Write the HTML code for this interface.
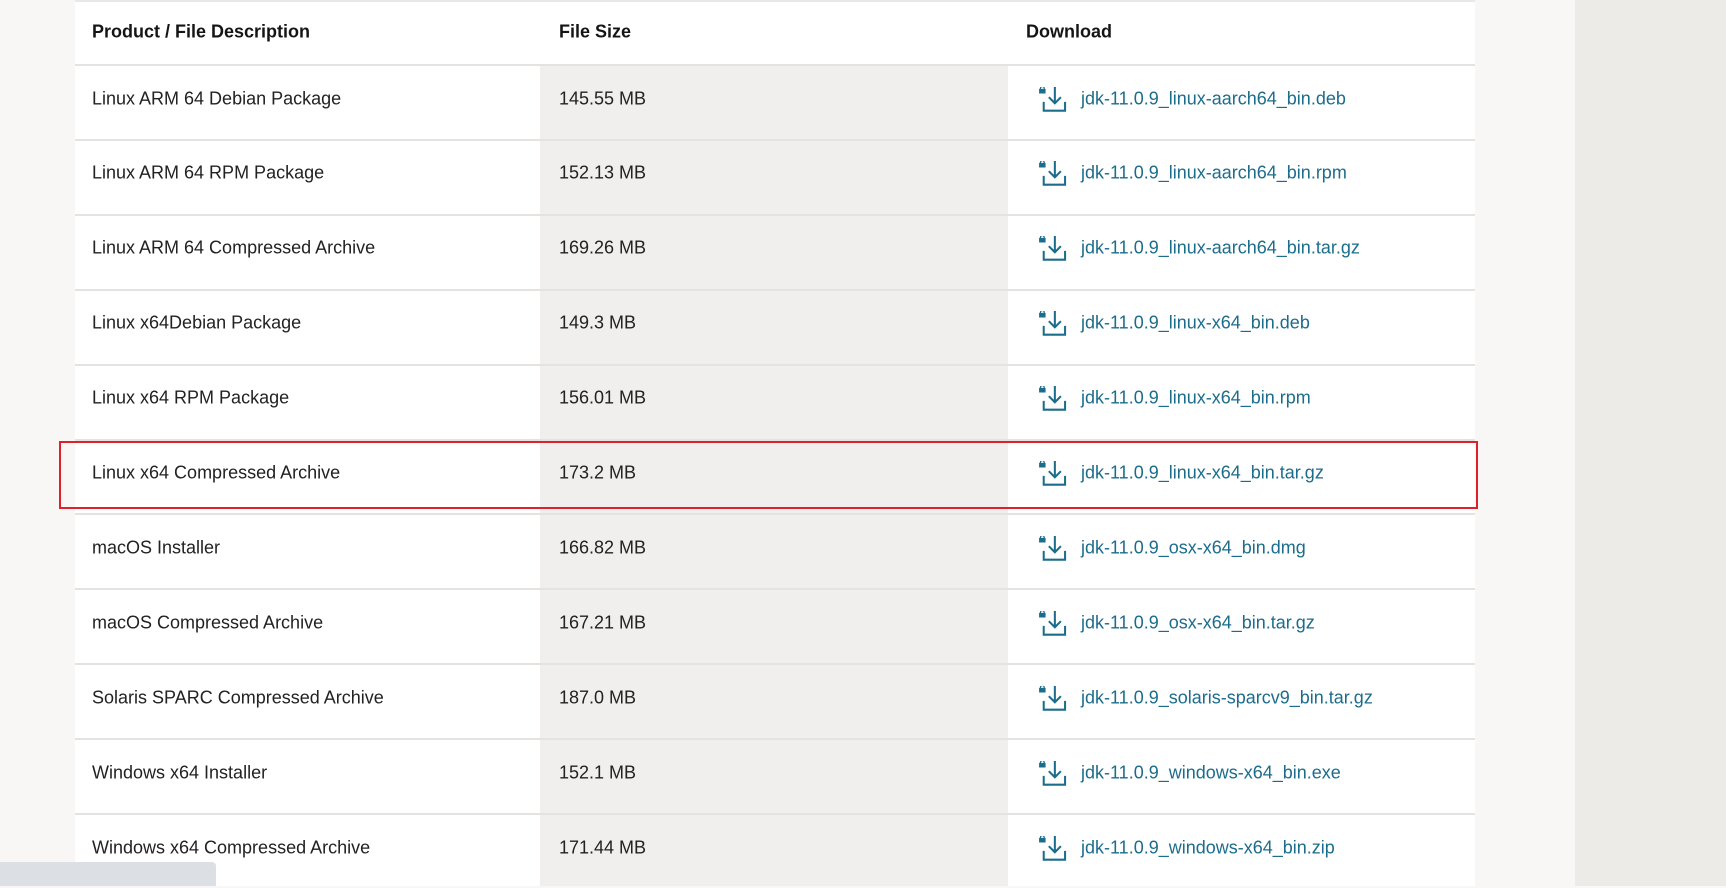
<!DOCTYPE html>
<html><head><meta charset="utf-8"><style>
body{margin:0;width:1726px;height:886px;overflow:hidden;background:#f8f7f5;font-family:"Liberation Sans",sans-serif;position:relative}
.rbg{position:absolute;left:1575px;top:0;width:151px;height:886px;background:#ecebe8}
.tbl{position:absolute;left:75px;top:0;width:1400px;height:886px;background:#fff}
.c2{position:absolute;left:465px;top:0;width:468px;height:886px;background:#f0efed}
.row{position:absolute;left:0;width:1400px;height:75px;border-top:2px solid #e4e3e1;box-sizing:border-box;font-size:18px;color:#222}
.row span{position:absolute;top:50%;transform:translateY(-50%);margin-top:-4px;white-space:nowrap}
.a{left:17px}.b{left:484px}.c{left:1006px;color:#1c6d8c}
.h{font-weight:bold;font-size:18px;color:#161513}
.ic{position:absolute;left:964px;top:50%;margin-top:-16px}
.red{position:absolute;left:59px;top:441px;width:1419px;height:68px;border:2px solid #e0202a;box-sizing:border-box}
.sb{position:absolute;left:0;top:862px;width:216px;height:24px;background:#dcdfe3;border-top-right-radius:4px}
</style></head><body>
<div class="rbg"></div>
<div class="tbl">
<div class="c2"></div>
<div class="row" style="top:0;border-top:2px solid #e8e8e8;height:64px;background:#fff"><span class="a h" style="margin-top:-1px">Product / File Description</span><span class="b h" style="margin-top:-1px">File Size</span><span class="h" style="position:absolute;left:951px;top:50%;transform:translateY(-50%);margin-top:-1px">Download</span></div>
</div>
<div class="red"></div>
<div class="sb"></div>
<script>
var d=[["Linux ARM 64 Debian Package","145.55 MB","jdk-11.0.9_linux-aarch64_bin.deb"],
["Linux ARM 64 RPM Package","152.13 MB","jdk-11.0.9_linux-aarch64_bin.rpm"],
["Linux ARM 64 Compressed Archive","169.26 MB","jdk-11.0.9_linux-aarch64_bin.tar.gz"],
["Linux x64Debian Package","149.3 MB","jdk-11.0.9_linux-x64_bin.deb"],
["Linux x64 RPM Package","156.01 MB","jdk-11.0.9_linux-x64_bin.rpm"],
["Linux x64 Compressed Archive","173.2 MB","jdk-11.0.9_linux-x64_bin.tar.gz"],
["macOS Installer","166.82 MB","jdk-11.0.9_osx-x64_bin.dmg"],
["macOS Compressed Archive","167.21 MB","jdk-11.0.9_osx-x64_bin.tar.gz"],
["Solaris SPARC Compressed Archive","187.0 MB","jdk-11.0.9_solaris-sparcv9_bin.tar.gz"],
["Windows x64 Installer","152.1 MB","jdk-11.0.9_windows-x64_bin.exe"],
["Windows x64 Compressed Archive","171.44 MB","jdk-11.0.9_windows-x64_bin.zip"]];
var t=document.querySelector('.tbl'),h='';
var ic='<svg class="ic" width="28" height="26" viewBox="0 0 30 28"><rect x="0" y="2" width="7" height="5" fill="#1c6d8c"/><path d="M1.5 3V1.5a2 2 0 0 1 4 0V3" fill="none" stroke="#1c6d8c" stroke-width="1.3"/><path d="M17 0v17M10.5 11l6.5 6.5 6.5-6.5" fill="none" stroke="#1c6d8c" stroke-width="2.2"/><path d="M5 16v9.5h23V16" fill="none" stroke="#1c6d8c" stroke-width="2.2"/></svg>';
for(var i=0;i<d.length;i++){h+='<div class="row" style="top:'+(64+i*74.9)+'px"><span class="a">'+d[i][0]+'</span><span class="b">'+d[i][1]+'</span>'+ic+'<span class="c">'+d[i][2]+'</span></div>';}
t.insertAdjacentHTML('beforeend',h);
</script>
</body></html>
